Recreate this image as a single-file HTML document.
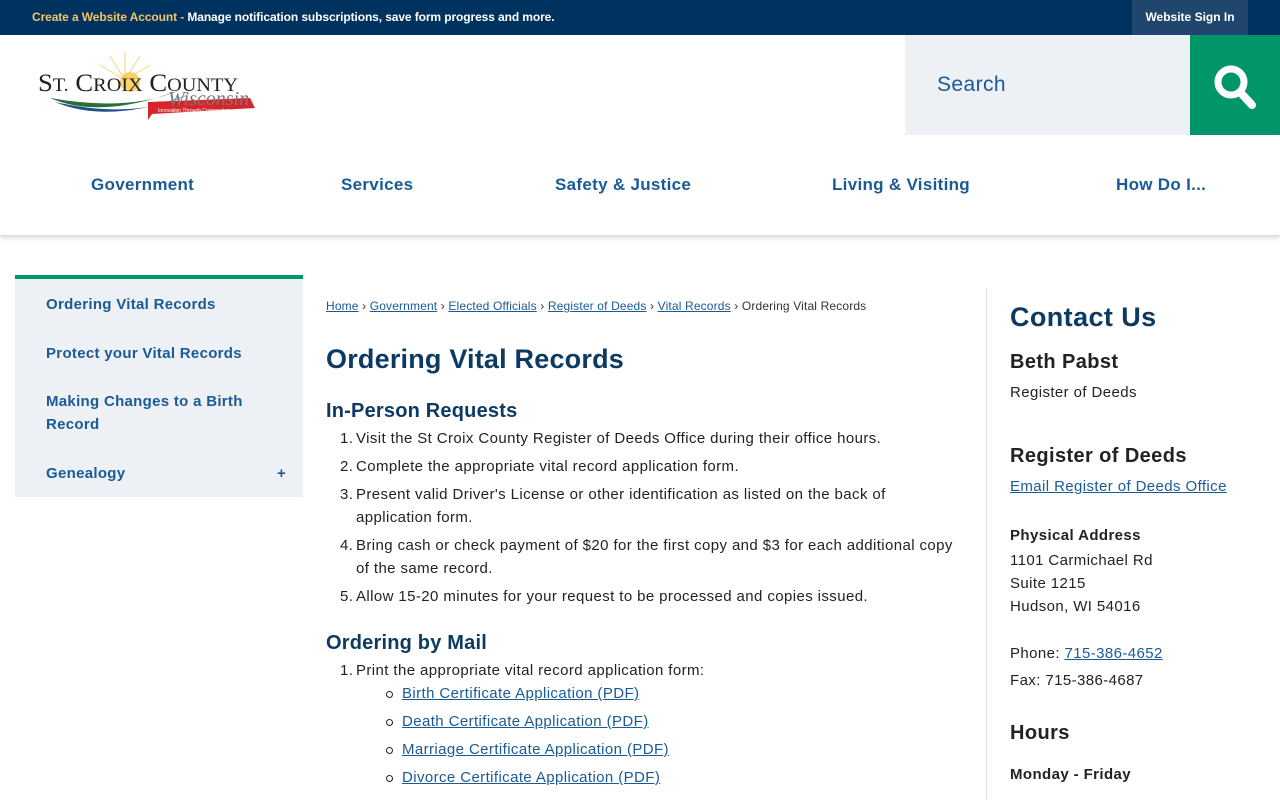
<!DOCTYPE html>
<html><head><meta charset="utf-8"><style>
*{margin:0;padding:0;box-sizing:border-box}
body{width:1280px;height:800px;overflow:hidden;background:#fff;font-family:"Liberation Sans",Arial,sans-serif;color:#222;position:relative}
a{color:#1a5a96;text-decoration:underline}
.top{position:absolute;left:0;top:0;width:1280px;height:35px;background:#00325f;color:#fff;font-size:12px;font-weight:bold}
.top .msg{position:absolute;left:32px;top:10px;letter-spacing:-.1px}
.top .msg b{color:#f3c565}
.top .si{position:absolute;left:1132px;top:0;width:116px;height:35px;background:#21466e;text-align:center;line-height:35px;font-size:12px}
.search{position:absolute;left:905px;top:35px;width:285px;height:100px;background:#edf0f4;color:#1a5a96;font-size:21px;padding:38px 0 0 32px;letter-spacing:.4px}
.sbtn{position:absolute;left:1190px;top:35px;width:90px;height:100px;background:#00966a}
.nav{position:absolute;top:175px;font-size:17px;font-weight:bold;color:#1a5a96;letter-spacing:.3px}
.navbar{position:absolute;left:0;top:135px;width:1280px;height:100px;box-shadow:0 3px 4px rgba(0,0,0,.15)}
.side{position:absolute;left:15px;top:275px;width:288px;height:222px;background:#edf0f4;border-top:4px solid #00966a}
.side div{position:absolute;left:31px;font-size:15px;font-weight:bold;color:#1a5a96;line-height:23px;letter-spacing:.3px}
.bc{position:absolute;left:326px;top:299px;font-size:12px;color:#333;white-space:nowrap;letter-spacing:.15px}
h1{position:absolute;left:326px;top:344px;font-size:27px;color:#0d3a63;white-space:nowrap;letter-spacing:.2px}
h2{position:absolute;left:326px;font-size:20px;color:#0d3a63;white-space:nowrap;letter-spacing:.2px}
.li{position:absolute;left:340px;font-size:15px;color:#222;line-height:23px;width:620px;letter-spacing:.4px}
.li span{position:absolute;left:0}
.li p{margin-left:16px}
.sub{position:absolute;left:386px;font-size:15px;line-height:23px;letter-spacing:.4px}
.sub:before{content:"";position:absolute;left:0;top:9px;width:5px;height:5px;border:1px solid #222;border-radius:50%}
.sub a{margin-left:16px}
.vline{position:absolute;left:986px;top:288px;width:1px;height:512px;background:#e3e3e3}
.r{position:absolute;left:1010px;white-space:nowrap;font-size:15px;color:#222;letter-spacing:.4px}
</style></head><body>
<div class="top"><div class="msg"><b>Create a Website Account</b><span style="color:#f3c565"> - </span>Manage notification subscriptions, save form progress and more.</div><div class="si">Website Sign In</div></div>

<svg style="position:absolute;left:30px;top:50px" width="235" height="75" viewBox="0 0 235 75">
<g stroke="#f5c44e" stroke-width="1" opacity=".7"><line x1="95" y1="30" x2="95" y2="2"/><line x1="95" y1="30" x2="80" y2="6"/><line x1="95" y1="30" x2="110" y2="6"/><line x1="95" y1="30" x2="70" y2="15"/><line x1="95" y1="30" x2="120" y2="15"/></g>
<circle cx="100" cy="32" r="10" fill="#f7c948" opacity=".8"/>
<path d="M20 48 Q70 70 150 40 Q100 62 20 48Z" fill="#2a6f3a"/>
<path d="M25 52 Q80 75 160 44 Q105 70 25 52Z" fill="#1d4f8c"/>
<path d="M118 52 L220 48 L225 58 L122 64 L118 70Z" fill="#d8242b"/>
<text x="8" y="41" font-family="Liberation Serif,serif" font-size="25" fill="#222" textLength="200" lengthAdjust="spacingAndGlyphs">S<tspan font-size="19">T.</tspan> C<tspan font-size="19">ROIX</tspan> C<tspan font-size="19">OUNTY</tspan></text>
<text x="138" y="55" font-family="Liberation Serif,serif" font-style="italic" font-size="20" fill="#777">Wisconsin</text>
<text x="128" y="62" font-size="5" fill="#fff">Innovation Through Cooperation</text>
</svg>

<div class="search">Search</div>
<div class="sbtn"><svg width="90" height="100" viewBox="0 0 90 100"><circle cx="41" cy="47" r="13" fill="none" stroke="#fff" stroke-width="7"/><line x1="50" y1="57" x2="62" y2="70" stroke="#fff" stroke-width="8" stroke-linecap="round"/></svg></div>

<div class="navbar"></div>
<div class="nav" style="left:91px">Government</div>
<div class="nav" style="left:341px">Services</div>
<div class="nav" style="left:555px">Safety &amp; Justice</div>
<div class="nav" style="left:832px">Living &amp; Visiting</div>
<div class="nav" style="left:1116px">How Do I...</div>

<div class="side">
<div style="top:14px">Ordering Vital Records</div>
<div style="top:63px">Protect your Vital Records</div>
<div style="top:111px">Making Changes to a Birth<br>Record</div>
<div style="top:183px">Genealogy</div>
<div style="top:183px;left:262px">+</div>
</div>

<div class="bc"><a>Home</a> › <a>Government</a> › <a>Elected Officials</a> › <a>Register of Deeds</a> › <a>Vital Records</a> › Ordering Vital Records</div>
<h1>Ordering Vital Records</h1>
<h2 style="top:400px">In-Person Requests</h2>
<div class="li" style="top:427px"><span>1.</span><p>Visit the St Croix County Register of Deeds Office during their office hours.</p></div>
<div class="li" style="top:455px"><span>2.</span><p>Complete the appropriate vital record application form.</p></div>
<div class="li" style="top:483px"><span>3.</span><p>Present valid Driver's License or other identification as listed on the back of application form.</p></div>
<div class="li" style="top:534px"><span>4.</span><p>Bring cash or check payment of $20 for the first copy and $3 for each additional copy of the same record.</p></div>
<div class="li" style="top:585px"><span>5.</span><p>Allow 15-20 minutes for your request to be processed and copies issued.</p></div>
<h2 style="top:632px">Ordering by Mail</h2>
<div class="li" style="top:659px"><span>1.</span><p>Print the appropriate vital record application form:</p></div>
<div class="sub" style="top:682px"><a>Birth Certificate Application (PDF)</a></div>
<div class="sub" style="top:710px"><a>Death Certificate Application (PDF)</a></div>
<div class="sub" style="top:738px"><a>Marriage Certificate Application (PDF)</a></div>
<div class="sub" style="top:766px"><a>Divorce Certificate Application (PDF)</a></div>

<div class="vline"></div>
<div class="r" style="top:302px;font-size:27px;font-weight:bold;color:#0d3a63">Contact Us</div>
<div class="r" style="top:351px;font-size:20px;font-weight:bold">Beth Pabst</div>
<div class="r" style="top:384px">Register of Deeds</div>
<div class="r" style="top:445px;font-size:20px;font-weight:bold">Register of Deeds</div>
<div class="r" style="top:478px"><a>Email Register of Deeds Office</a></div>
<div class="r" style="top:527px;font-weight:bold">Physical Address</div>
<div class="r" style="top:549px;line-height:23px">1101 Carmichael Rd<br>Suite 1215<br>Hudson, WI 54016</div>
<div class="r" style="top:645px">Phone: <a>715-386-4652</a></div>
<div class="r" style="top:672px">Fax: 715-386-4687</div>
<div class="r" style="top:722px;font-size:20px;font-weight:bold">Hours</div>
<div class="r" style="top:766px;font-weight:bold">Monday - Friday</div>
</body></html>
